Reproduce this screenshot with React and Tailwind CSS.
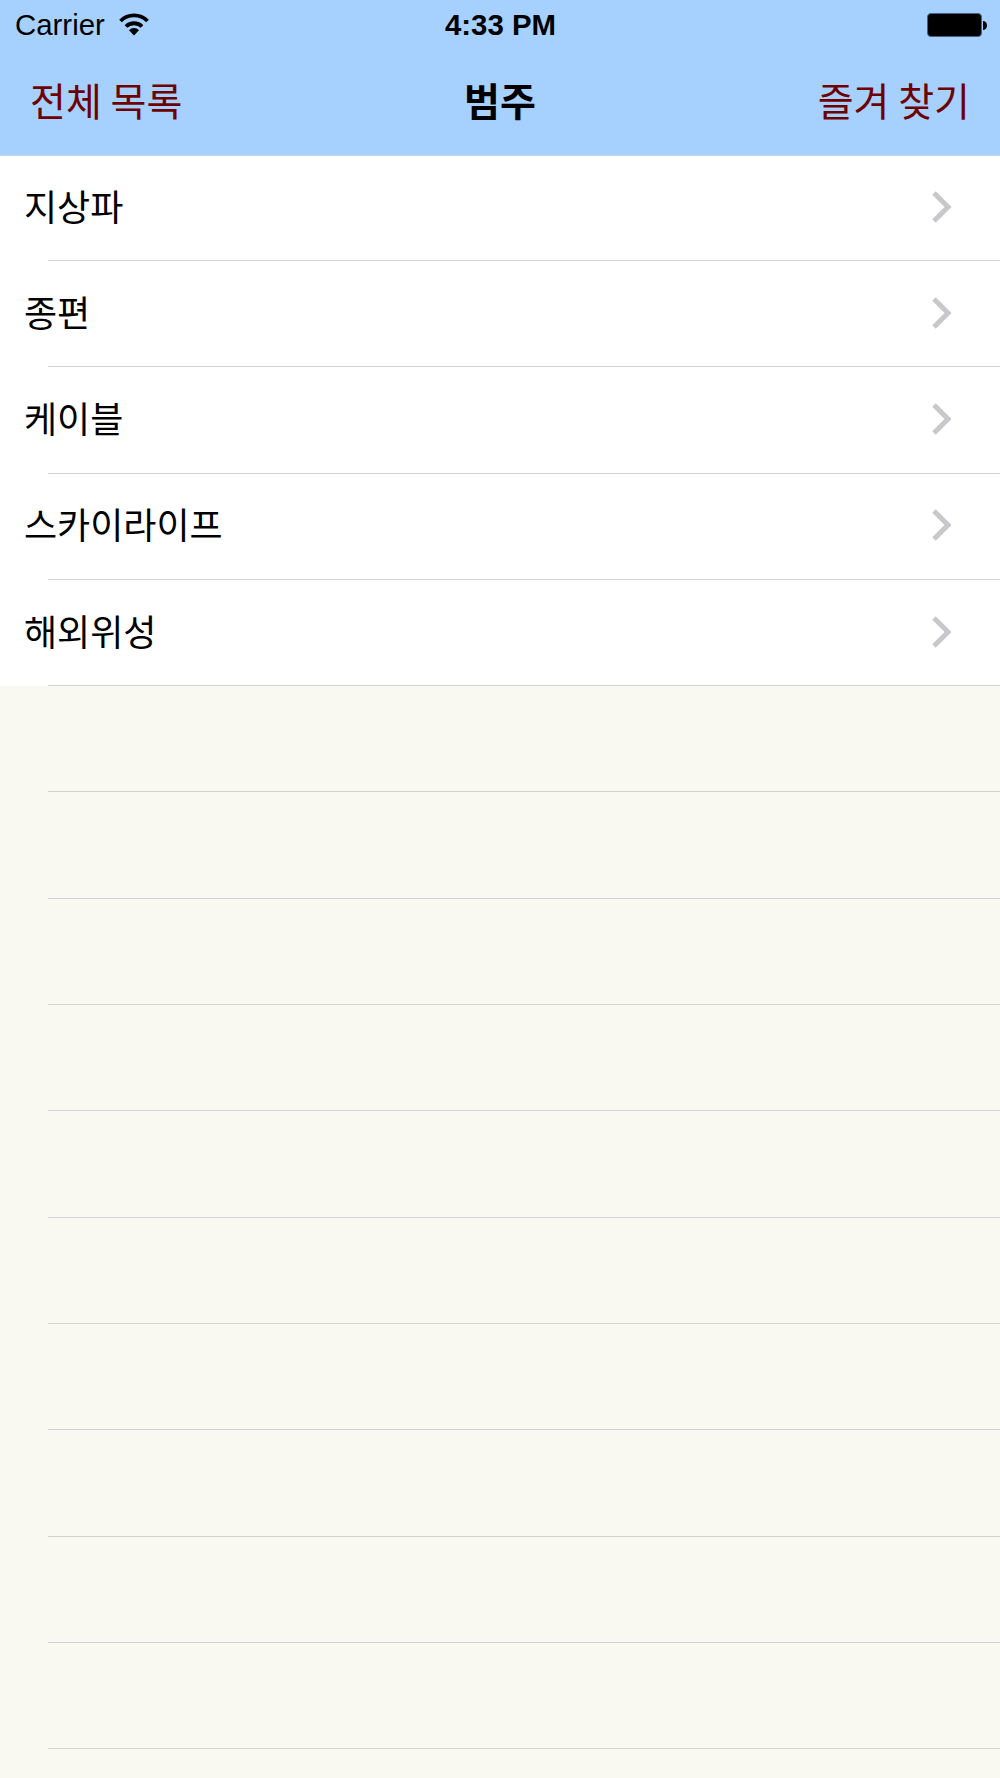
const KR = "font-['Noto_Sans_CJK_KR','Noto_Sans',sans-serif]";
const LAT = "font-['Liberation_Sans',sans-serif]";

function Wifi() {
  return (
    <svg width="30" height="23" viewBox="0 0 30 23" className="ml-[14px] mb-[1px]">
      <path d="M1.5 8 A19 19 0 0 1 28.5 8" fill="none" stroke="#000" strokeWidth="3.8" />
      <path d="M7 13.5 A11.5 11.5 0 0 1 23 13.5" fill="none" stroke="#000" strokeWidth="3.8" />
      <path d="M10 17.2 A7 7 0 0 1 20 17.2 L15 22.5 Z" fill="#000" />
    </svg>
  );
}

function Battery() {
  return (
    <div className="flex items-center">
      <div className="w-[55px] h-[24px] rounded-[4px] border-[1.5px] border-[#45627f] bg-black" />
      <svg width="4" height="9" viewBox="0 0 4 9" className="ml-[1px]">
        <path d="M0 0 A4 4.5 0 0 1 0 9 Z" fill="#000" />
      </svg>
    </div>
  );
}

function Chevron() {
  return (
    <svg width="24" height="34" viewBox="0 0 24 34" className="mr-[47px] mb-[2px]">
      <path d="M5 3 L19 17 L5 31" fill="none" stroke="#c8c7cc" strokeWidth="5" />
    </svg>
  );
}

function Separator() {
  return <div className="h-px ml-[48px] bg-[#d2d2d4] shrink-0" />;
}

function Row({ label, first }) {
  return (
    <div className={`flex flex-col bg-white ${first ? "h-[105px]" : "h-[106.3px]"}`}>
      <div className="flex-1 flex items-center justify-between pl-[24px]">
        <span className={`${KR} text-[36px] leading-none text-black mb-[6px]`}>{label}</span>
        <Chevron />
      </div>
      <Separator />
    </div>
  );
}

function EmptyRow() {
  return (
    <div className="flex flex-col justify-end h-[106.3px] shrink-0">
      <Separator />
    </div>
  );
}

export default function App() {
  const rows = ["지상파", "종편", "케이블", "스카이라이프", "해외위성"];
  return (
    <div className="w-[1000px] h-[1778px] overflow-hidden bg-[#f9f8f1] flex flex-col">
      <header className="h-[156px] shrink-0 bg-[#a6d1ff] border-b border-[#c2d6e8] flex flex-col">
        <div className={`${LAT} h-[50px] grid grid-cols-3 items-center pl-[14px] pr-[13px] text-black`}>
          <div className="flex items-center pl-[1px]">
            <span className="text-[29.4px] leading-none">Carrier</span>
            <Wifi />
          </div>
          <span className="text-[29.4px] leading-none font-bold text-center">4:33 PM</span>
          <div className="flex justify-end">
            <Battery />
          </div>
        </div>
        <div className={`${KR} flex-1 grid grid-cols-3 items-center px-[30px] pb-[6px]`}>
          <span className="text-[39px] leading-none text-[#6f0000] whitespace-nowrap">전체 목록</span>
          <span className="text-[39px] leading-none font-bold text-black text-center">범주</span>
          <span className="text-[39px] leading-none text-[#6f0000] text-right whitespace-nowrap">즐겨 찾기</span>
        </div>
      </header>
      {rows.map((r, i) => (
        <Row key={r} label={r} first={i === 0} />
      ))}
      {Array.from({ length: 10 }).map((_, i) => (
        <EmptyRow key={i} />
      ))}
    </div>
  );
}
